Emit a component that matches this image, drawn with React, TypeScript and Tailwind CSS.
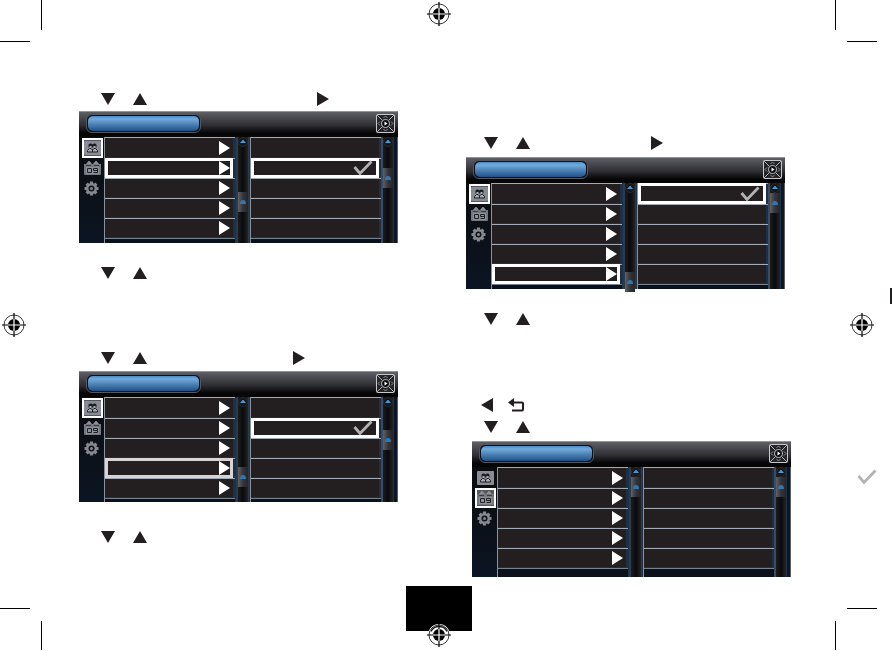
import { useState } from 'react'
import clsx from 'clsx'

type Dir = 'up' | 'down' | 'left' | 'right'
type Tab = 'people' | 'calendar' | 'settings'

function Triangle({ dir, className }: { dir: Dir, className?: string }) {
  const points = { down: '0,1 14,1 7,13', up: '0,13 14,13 7,1', right: '0,0 12,7 0,14', left: '12,0 0,7 12,14' }
  return (
    <svg width="14" height="14" viewBox="0 0 14 14" className={clsx('shrink-0', className)} aria-hidden="true">
      <polygon points={points[dir]} fill="#231f20" />
    </svg>
  )
}

function BackIcon() {
  return (
    <svg width="17" height="14" viewBox="0 0 17 14" className="ml-[13px] shrink-0" aria-hidden="true">
      <path d="M0 4.500 L6 0 V9 Z" fill="#231f20" />
      <path d="M5 4.500 H14 Q15 4.500 15 5.500 V11.500 Q15 12.500 14 12.500 H4" fill="none" stroke="#231f20" strokeWidth="2" />
    </svg>
  )
}

function Check({ className }: { className?: string }) {
  return (
    <svg width="20" height="16" viewBox="0 0 20 16" className={clsx('shrink-0', className)} aria-hidden="true">
      <path d="M1.500 7 L7 13.500 L18.500 1.500" fill="none" stroke="#b1b3b4" strokeWidth="2.800" />
    </svg>
  )
}

function Registration({ overlap = false }: { overlap?: boolean }) {
  return (
    <svg width="24" height="24" viewBox="0 0 24 24" className="shrink-0" aria-hidden="true">
      {overlap && <circle cx="12" cy="12" r="11" fill="#fff" />}
      <circle cx="12" cy="12" r="10" fill="none" stroke="#222" strokeWidth="0.900" />
      {overlap && <path d="M4 8.500 A9 9 0 0 1 20 8.500" fill="none" stroke="#222" strokeWidth="1.500" />}
      <circle cx="12" cy="12" r="6" fill="#000" />
      <path d="M0 12 H24 M12 0 V24" stroke="#000" strokeWidth="1.200" />
      <path d="M6 12 H18 M12 6 V18" stroke="#fff" strokeWidth="1.200" />
    </svg>
  )
}

function Corner({ d }: { d: string }) {
  return (
    <svg width="42" height="42" viewBox="0 0 42 42" className="shrink-0" aria-hidden="true">
      <path d={d} fill="none" stroke="#000" strokeWidth="1" />
    </svg>
  )
}

function PeopleIcon() {
  return (
    <svg width="17" height="14" viewBox="0 0 17 14" aria-hidden="true">
      <rect width="17" height="14" rx="1" fill="#898c94" />
      <path d="M4.500 6.500 V4 Q4.500 2.500 6.300 2.500 Q8 2.500 8.500 3.500 Q9 2.500 10.700 2.500 Q12.500 2.500 12.500 4 V6.500 Z" fill="#1c1e22" />
      <path d="M5.500 5 H7.500 V7 H5.500 Z M9.500 5 H11.500 V7 H9.500 Z" fill="#a9acb3" />
      <path d="M3.500 11 V9.500 L5.500 7.500 H7 L8.500 9 L10 7.500 H11.500 L13.500 9.500 V11 Z M8.500 9 V11" fill="#a9acb3" stroke="#1c1e22" />
    </svg>
  )
}

function CalendarIcon() {
  return (
    <svg width="17" height="14" viewBox="0 0 17 14" aria-hidden="true">
      <path d="M0 3 H17 V13 Q17 14 16 14 H1 Q0 14 0 13 Z" fill="#74777f" />
      <path d="M4.500 0 H5.500 L8 3 H2 Z M11.500 0 H12.500 L15 3 H9 Z" fill="#8d9098" />
      <path d="M2 4.500 H7 M10 4.500 H15" stroke="#3a3c42" />
      <rect x="2" y="6" width="13" height="7" fill="#8d9098" />
      <path d="M3.500 7.500 H7.500 V11.500 H3.500 Z M13.500 9.500 H9.500 V7.500 H13.500 V11.500 H9.500" fill="none" stroke="#1f2126" />
    </svg>
  )
}

function GearIcon() {
  return (
    <svg width="15" height="15" viewBox="0 0 15 15" className="mr-[3px]" aria-hidden="true">
      <g stroke="#858890" strokeWidth="3.200">
        <path d="M7.500 0.500 V14.500 M0.500 7.500 H14.500 M2.600 2.600 L12.400 12.400 M12.400 2.600 L2.600 12.400" />
      </g>
      <circle cx="7.500" cy="7.500" r="5.500" fill="#858890" />
      <circle cx="7.500" cy="7.500" r="3" fill="#101318" />
      <circle cx="7.500" cy="7.500" r="1.500" fill="#858890" />
    </svg>
  )
}

function PadIcon() {
  return (
    <svg width="19" height="19" viewBox="0 0 19 19" aria-hidden="true">
      <rect x="0.500" y="0.500" width="18" height="18" rx="1" fill="#242529" stroke="#c8c8cb" />
      <path d="M1 1 L6 6 M18 1 L13 6 M1 18 L6 13 M18 18 L13 13" stroke="#b0b0b4" />
      <circle cx="9.500" cy="9.500" r="4" fill="#0c0c0e" stroke="#a0a0a5" strokeWidth="1.200" />
      <path d="M8.500 7.500 L11.500 9.500 L8.500 11.500 Z" fill="#fff" />
      <path d="M7.500 4 L9.500 2 L11.500 4 M7.500 15 L9.500 17 L11.500 15 M4 7.500 L2 9.500 L4 11.500 M15 7.500 L17 9.500 L15 11.500" fill="none" stroke="#8c8c91" />
    </svg>
  )
}

const tabs: { id: Tab, icon: typeof PeopleIcon }[] = [
  { id: 'people', icon: PeopleIcon },
  { id: 'calendar', icon: CalendarIcon },
  { id: 'settings', icon: GearIcon },
]

function ScrollBar({ offset }: { offset: string }) {
  return (
    <div className="w-[10px] shrink-0 bg-linear-to-r from-[#1c1d20] via-[#0a0a0b] to-[#232427]">
      <svg width="10" height="10" viewBox="0 0 10 10" className="block" aria-hidden="true">
        <circle cx="5" cy="5" r="4.500" fill="#15171a" stroke="#2a2d31" />
        <path d="M2 6 L4.500 3 H5.500 L8 6 Z" fill="#4b96ce" />
      </svg>
      <div className={clsx('flex h-5 items-center justify-center bg-linear-to-r from-[#606268] via-[#34353a] to-[#25262a]', offset)}>
        <svg width="6" height="5" viewBox="0 0 6 5" aria-hidden="true">
          <path d="M0 4 Q0 0 3 0 Q6 0 6 4 Z" fill="#3475ad" />
        </svg>
      </div>
    </div>
  )
}

type ListProps = { label: string, selected?: number, arrows?: boolean, ring?: string, onSelect: (i: number) => void }

function List({ label, selected, arrows, ring = 'ring-white', onSelect }: ListProps) {
  return (
    <ul aria-label={label} className="min-w-0 flex-1 border-l border-[#8b9199] bg-[#0a111b]">
      {[0, 1, 2, 3, 4].map(i => (
        <li key={i} className={clsx('border-t border-[#a3abb4] bg-[#1c3149] pr-[2px]', i === 0 ? 'h-[21px]' : 'h-5')}>
          <button
            aria-label={`${label} ${i + 1}`}
            onClick={() => onSelect(i)}
            className={clsx(
              'flex w-full items-center justify-end bg-[#231f20] pr-[3px]',
              selected === i && `relative -mt-px ring-3 ring-inset ${ring}`,
              selected === i ? (i === 0 ? 'h-[21px]' : 'h-5') : (i === 0 ? 'h-[19px]' : 'h-[18px]'),
            )}
          >
            {arrows && (
              <svg width="11" height="14" viewBox="0 0 11 14" aria-hidden="true"><polygon points="0,0 11,7 0,14" fill="#fff" /></svg>
            )}
            {!arrows && selected === i && <Check className="mr-[3px]" />}
          </button>
        </li>
      ))}
      <li className="border-t border-[#75828f]" />
    </ul>
  )
}

type PanelProps = {
  tab?: Tab
  item?: number
  option?: number
  ring?: string
  left: string
  right: string
  className: string
}

function Panel({ tab: initialTab = 'people', item, option, ring, left, right, className }: PanelProps) {
  const [tab, setTab] = useState(initialTab)
  const [row, setRow] = useState(item)
  const [choice, setChoice] = useState(option)

  return (
    <section className={clsx('flex flex-col bg-[#0a111b]', className)}>
      <header className="flex h-[26px] shrink-0 items-start justify-between border-t border-[#929398] bg-linear-to-b from-[#5f6066] via-[#2c2c31] via-55% to-[#060607] to-85% pt-[2px] pr-[3px] pl-[7px]">
        <div className="h-[19px] w-[115px] rounded-[6px] border border-[#55575d] bg-[#0a1220] p-px">
          <div className="h-full rounded-[5px] bg-linear-to-b from-[#4a8cc8] via-[#73abdb] via-20% to-[#1f5186]" />
        </div>
        <PadIcon />
      </header>
      <div className="flex min-h-0 flex-1">
        <nav className="w-[25px] shrink-0 bg-linear-to-b from-[#0b0c0f] to-[#0b1523] pt-px pl-[3px]">
          {tabs.map(({ id, icon: Icon }) => (
            <button
              key={id}
              aria-label={id}
              onClick={() => setTab(id)}
              className={clsx('flex h-5 w-[21px] items-center justify-center', tab === id && 'bg-[#55575e] ring-2 ring-inset ring-white')}
            >
              <Icon />
            </button>
          ))}
        </nav>
        <List label="Item" selected={row} arrows ring={ring} onSelect={setRow} />
        <div className="flex w-[15px] shrink-0 justify-center border-x border-[#1d3149] bg-[#2b3a4d]">
          <ScrollBar offset={left} />
        </div>
        <List label="Option" selected={choice} onSelect={setChoice} />
        <div className="flex w-[17px] shrink-0 border-r border-[#5b5d61] bg-[#0d1624]">
          <div className="w-[2px] bg-[#3b4a5e]" />
          <ScrollBar offset={right} />
          <div className="w-px bg-[#1d3149]" />
        </div>
      </div>
    </section>
  )
}

function Hint({ className, next }: { className: string, next?: string }) {
  return (
    <p className={clsx('flex h-[14px] items-center', className)}>
      <Triangle dir="down" />
      <Triangle dir="up" className="ml-[18px]" />
      {next && <Triangle dir="right" className={next} />}
    </p>
  )
}

export default function App() {
  return (
    <div className="flex min-h-screen bg-white font-['Liberation_Sans',sans-serif]">
      <div className="flex flex-1 flex-col">
        <div className="flex h-[42px] justify-between">
          <Corner d="M41.500 0 V30 M0 41.500 H30" />
          <div className="pt-[2px]"><Registration /></div>
          <Corner d="M0.500 0 V30 M12 41.500 H42" />
        </div>

        <div className="flex flex-1">
          <div className="flex w-[42px] shrink-0 items-center pl-[2px]"><Registration /></div>
          <main className="grid flex-1 grid-cols-2 gap-[62px] pr-[44px] pl-[37px]">
            <div className="pt-[50px] pr-[6px]">
              <Hint className="pl-[22px]" next="ml-[170px]" />
              <Panel className="mt-[5px] h-[132px]" item={1} option={1} left="mt-[45px]" right="mt-[21px]" />
              <Hint className="mt-[23px] pl-[22px]" />
              <Hint className="mt-[71px] pl-[22px]" next="ml-[146px]" />
              <Panel className="mt-[6px] h-[131px]" item={3} option={1} ring="ring-[#d8d3d4]" left="mt-[60px]" right="mt-[23px]" />
              <Hint className="mt-[28px] pl-[22px]" />
            </div>
            <div className="pt-[94px]">
              <Hint className="pl-[18px]" next="ml-[121px]" />
              <Panel className="mt-[7px] mr-[6px] h-[132px]" item={4} option={0} left="mt-[79px]" right="mt-0" />
              <Hint className="mt-[23px] pl-[18px]" />
              <p className="mt-[72px] flex h-[14px] items-center pl-[15px]">
                <Triangle dir="left" />
                <BackIcon />
              </p>
              <Hint className="mt-[8px] pl-[18px]" />
              <Panel className="mt-[7px] ml-[6px] h-[136px]" tab="calendar" left="mt-0" right="mt-0" />
            </div>
          </main>
          <div className="grid w-[42px] shrink-0 grid-rows-[1fr_auto_1fr] justify-items-end">
            <span />
            <div className="pr-[3px]"><Registration /></div>
            <Check className="mt-[132px]" />
          </div>
        </div>

        <footer className="flex h-[43px] justify-between">
          <Corner d="M41.500 13 V42 M0 0.500 H30" />
          <div className="relative -mt-[22px] h-[45px] w-[66px] bg-black">
            <div className="absolute -bottom-4 left-[21px]"><Registration overlap /></div>
          </div>
          <Corner d="M0.500 13 V42 M12 0.500 H42" />
        </footer>
      </div>
      <div className="flex w-[15px] shrink-0 justify-end pt-[288px]">
        <div className="h-4 w-[2px] bg-[#231f20]" />
      </div>
    </div>
  )
}
